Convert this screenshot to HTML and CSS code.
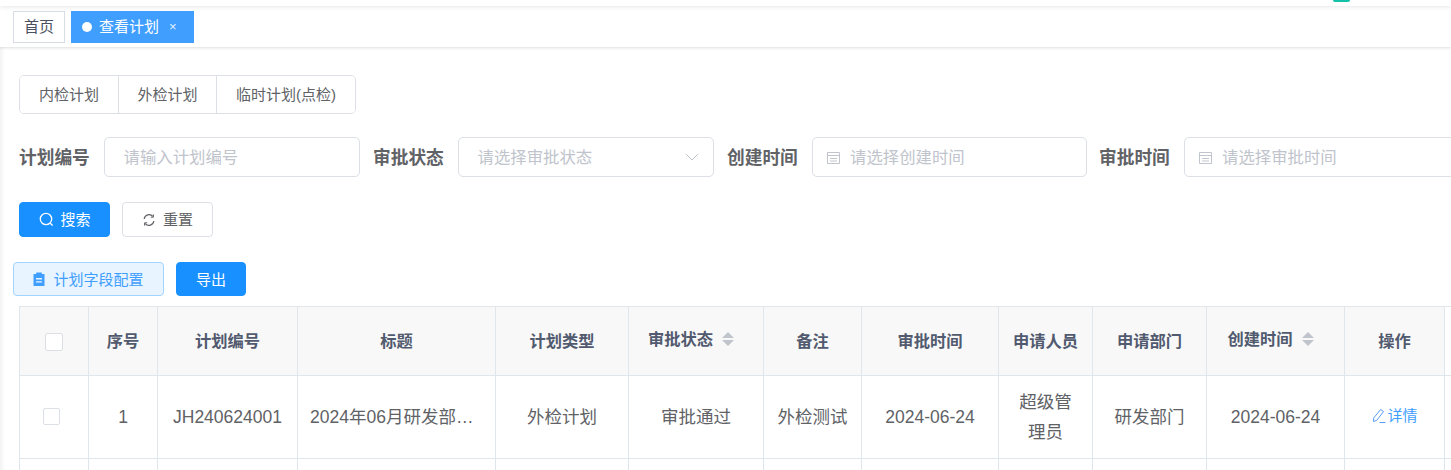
FILE: index.html
```html
<!DOCTYPE html>
<html lang="zh">
<head>
<meta charset="utf-8">
<title>查看计划</title>
<link rel="stylesheet" href="styles.css">
</head>
<body>
<div class="app">
  <header class="navbar"><span class="nav-badge"></span></header>
  <nav class="tags">
    <span class="tag">首页</span>
    <span class="tag tag-active"><i class="dot"></i>查看计划<span class="close">×</span></span>
  </nav>
  <main class="content">
    <div class="seg">
      <button class="seg-btn seg-a">内检计划</button>
      <button class="seg-btn seg-b">外检计划</button>
      <button class="seg-btn seg-c">临时计划(点检)</button>
    </div>
    <form class="filters">
      <label class="lbl">计划编号</label>
      <div class="field f-text"><span class="ph">请输入计划编号</span></div>
      <label class="lbl">审批状态</label>
      <div class="field f-select"><span class="ph">请选择审批状态</span>
        <svg class="chev" width="14" height="14" viewBox="0 0 14 14"><path d="M1 4l6 6 6-6" fill="none" stroke="#c0c4cc" stroke-width="1"/></svg>
      </div>
      <label class="lbl">创建时间</label>
      <div class="field f-date">
        <svg class="cal" width="15" height="15" viewBox="0 0 15 15"><path d="M1.5 2.5h12v11h-12zM1.5 5.500h12M4 8.500h7M4 11h7" fill="none" stroke="#c0c4cc"/></svg>
        <span class="ph">请选择创建时间</span></div>
      <label class="lbl">审批时间</label>
      <div class="field f-date f-last">
        <svg class="cal" width="15" height="15" viewBox="0 0 15 15"><path d="M1.5 2.5h12v11h-12zM1.5 5.500h12M4 8.500h7M4 11h7" fill="none" stroke="#c0c4cc"/></svg>
        <span class="ph">请选择审批时间</span></div>
    </form>
    <div class="actions">
      <button class="btn btn-primary btn-w">
        <svg class="ic-search" width="15" height="15" viewBox="0 0 15 15"><circle cx="8" cy="7" r="5.7" fill="none" stroke="#fff" stroke-width="1.3"/><path d="M12 11l2.600 2.600" stroke="#fff" stroke-width="1.3"/></svg><span class="t">搜索</span></button>
      <button class="btn btn-plain btn-w">
        <svg width="14" height="14" viewBox="0 0 14 14"><path d="M2.2 6A4.9 4.9 0 0 1 10.8 3.4M11.8 8A4.9 4.9 0 0 1 3.2 10.6" fill="none" stroke="#606266" stroke-width="1.2"/><path d="M11.4 1.4v2.8H8.8M2.6 12.6V9.8h2.6" fill="none" stroke="#606266" stroke-width="1"/></svg><span class="t">重置</span></button>
    </div>
    <div class="tools">
      <button class="btn btn-light">
        <svg width="12" height="14" viewBox="0 0 12 14"><path fill="#409eff" fill-rule="evenodd" d="M.5 2H3.2V.6h5.600V2h2.700v12H.5zM3 6v1.400h6V6zm0 3.200v1.400h6V9.200z"/></svg><span class="t">计划字段配置</span></button>
      <button class="btn btn-primary btn-export"><span class="t">导出</span></button>
    </div>
    <table class="grid">
      <colgroup>
        <col class="c1"><col class="c2"><col class="c3"><col class="c4"><col class="c5"><col class="c6"><col class="c7"><col class="c8"><col class="c9"><col class="c10"><col class="c11"><col class="c12"><col class="c13">
      </colgroup>
      <thead>
        <tr>
          <th><span class="check check-h"></span></th>
          <th>序号</th>
          <th>计划编号</th>
          <th>标题</th>
          <th>计划类型</th>
          <th><span class="sortable">审批状态<i class="sort"><b class="up"></b><b class="down"></b></i></span></th>
          <th>备注</th>
          <th>审批时间</th>
          <th>申请人员</th>
          <th>申请部门</th>
          <th><span class="sortable">创建时间<i class="sort"><b class="up"></b><b class="down"></b></i></span></th>
          <th>操作</th>
          <th class="gutter"></th>
        </tr>
      </thead>
      <tbody>
        <tr class="row">
          <td><span class="check check-b"></span></td>
          <td>1</td>
          <td>JH240624001</td>
          <td class="left">2024年06月研发部…</td>
          <td>外检计划</td>
          <td>审批通过</td>
          <td>外检测试</td>
          <td>2024-06-24</td>
          <td class="wrap">超级管理员</td>
          <td>研发部门</td>
          <td>2024-06-24</td>
          <td><a class="link"><svg width="15" height="16" viewBox="0 0 15 16"><path d="M9.600 1.500l3 2-6.800 8.800-3.300 1.200.2-3.500zM8.500 14.500h6" fill="none" stroke="#5a9cf8" stroke-width="1"/></svg>详情</a></td>
          <td class="gutter"></td>
        </tr>
        <tr class="row">
          <td></td><td></td><td></td><td></td><td></td><td></td><td></td><td></td><td></td><td></td><td></td><td></td><td class="gutter"></td>
        </tr>
      </tbody>
    </table>
  </main>
</div>
</body>
</html>
```

FILE: styles.css
```css
* { box-sizing: border-box; }
html, body { margin: 0; height: 470px; overflow: hidden; background: #fff; }
body {
  font-family: "Liberation Sans", "Noto Sans CJK SC", sans-serif;
  color: #606266;
}
.app {
  width: 1451px;
  height: 470px;
  overflow: hidden;
  position: relative;
}
.app::before {
  content: "";
  position: absolute;
  left: 0; top: 47px; bottom: 0;
  width: 5px;
  background: linear-gradient(to right, #f3f3f5, #fff);
  pointer-events: none;
}
.navbar {
  height: 6px;
  background: #fff;
  box-shadow: 0 1px 4px rgba(0, 21, 41, .1);
  position: relative;
  z-index: 1;
  padding-right: 101px;
  display: flex;
  justify-content: flex-end;
}
.nav-badge {
  width: 17px;
  height: 2px;
  background: #13c2a8;
  border-radius: 0 0 4px 4px;
}
.tags {
  height: 41px;
  display: flex;
  align-items: flex-start;
  gap: 6px;
  padding: 5px 0 0 13px;
  background: #fff;
  box-shadow: 0 1px 3px 0 rgba(0, 0, 0, .12), 0 0 3px 0 rgba(0, 0, 0, .04);
  position: relative;
}
.tag {
  height: 32px;
  line-height: 30px;
  border: 1px solid #d8dce5;
  padding: 0 10px;
  font-size: 15px;
  color: #495060;
  background: #fff;
  display: flex;
  align-items: center;
}
.tag-active {
  width: 123px;
  background: #409eff;
  border-color: #409eff;
  color: #fff;
}
.dot {
  width: 10px;
  height: 10px;
  border-radius: 50%;
  background: #fff;
  margin-right: 7px;
}
.close {
  font-size: 13px;
  margin-left: 10px;
  opacity: .85;
}
.content { padding: 28px 0 0 19px; }
.seg {
  display: flex;
  width: 337px;
  height: 39px;
  border: 1px solid #dcdfe6;
  border-radius: 5px;
  overflow: hidden;
}
.seg-btn {
  border: 0;
  border-right: 1px solid #dcdfe6;
  background: #fff;
  font: inherit;
  font-size: 15px;
  color: #606266;
  padding: 0 0 2px;
  height: 100%;
}
.seg-a { width: 99px; }
.seg-b { width: 98px; }
.seg-c { flex: 1; border-right: 0; }
.filters {
  display: flex;
  align-items: center;
  margin-top: 23px;
  height: 40px;
  white-space: nowrap;
}
.lbl {
  font-size: 17.7px;
  font-weight: 700;
  color: #606266;
  width: 70px;
  flex: none;
  margin-right: 15px;
  padding-bottom: 2px;
}
.field {
  height: 40px;
  border: 1px solid #dcdfe6;
  border-radius: 5px;
  background: #fff;
  display: flex;
  align-items: center;
  flex: none;
  margin-right: 13px;
  padding-left: 18.5px;
  font-size: 16.4px;
  color: #c0c4cc;
}
.ph { position: relative; top: -1px; }
.f-text { width: 256px; }
.f-select { width: 256px; justify-content: space-between; padding-right: 14px; }
.f-date { width: 275px; padding-left: 13px; margin-right: 12px; }
.f-last { margin-right: 0; }
.cal { margin-right: 9px; flex: none; }
.actions {
  display: flex;
  gap: 12px;
  margin-top: 25px;
}
.btn {
  font: inherit;
  font-size: 15px;
  height: 35px;
  border-radius: 4px;
  display: inline-flex;
  align-items: center;
  justify-content: center;
  padding: 0;
  border: 1px solid transparent;
}
.btn .t { position: relative; top: -1px; }
.btn svg { margin-right: 7px; flex: none; }
.btn-w { width: 91px; }
.btn-primary { background: #1890ff; border-color: #1890ff; color: #fff; }
.btn-plain { background: #fff; border-color: #dcdfe6; color: #606266; }
.tools {
  display: flex;
  gap: 12px;
  margin: 25px 0 0 -6px;
}
.btn-light {
  width: 151px;
  height: 34px;
  background: #e8f4ff;
  border-color: #a3d3ff;
  color: #409eff;
}
.btn-light svg { margin-right: 8px; }
.btn-export { width: 70px; height: 34px; }
.grid {
  table-layout: fixed;
  border-collapse: collapse;
  width: 1433px;
  margin-top: 10px;
  font-size: 17.5px;
  color: #606266;
}
.c1, .c2 { width: 69px; }
.c3 { width: 140px; }
.c4 { width: 198px; }
.c5 { width: 133px; }
.c6 { width: 135px; }
.c7 { width: 98px; }
.c8 { width: 137px; }
.c9 { width: 94px; }
.c10 { width: 114px; }
.c11 { width: 138px; }
.c12 { width: 100px; }
.c13 { width: 8px; }
th, td {
  border: 1px solid #dfe6ec;
  text-align: center;
  vertical-align: middle;
  padding: 0 12px;
}
th {
  height: 69px;
  background: #f8f8f9;
  font-size: 16.3px;
  font-weight: 700;
  color: #515a6e;
  white-space: nowrap;
  padding-bottom: 2px;
}
.row { height: 83px; }
td { line-height: 30px; overflow: hidden; }
th.gutter, td.gutter {
  background: #fff;
  border-right: 0;
  border-left: 1px solid #dfe6ec;
  padding: 0;
}
td.left { text-align: left; white-space: nowrap; }
.wrap { padding: 0 18px; }
.check {
  display: inline-block;
  border: 1px solid #dcdfe6;
  border-radius: 2px;
  background: #fff;
  vertical-align: middle;
}
.check-h { width: 18px; height: 18px; position: relative; top: 1px; }
.check-b { width: 17px; height: 17px; position: relative; left: -3px; top: -2px; }
.sortable {
  display: inline-flex;
  align-items: center;
  position: relative;
  top: -2px;
  left: -5px;
}
.sort {
  display: inline-flex;
  flex-direction: column;
  gap: 2px;
  margin-left: 9px;
  position: relative;
  top: 1px;
}
.up, .down {
  width: 0;
  height: 0;
  border-left: 6px solid transparent;
  border-right: 6px solid transparent;
}
.up { border-bottom: 6px solid #c0c4cc; }
.down { border-top: 6px solid #c0c4cc; }
.link {
  color: #409eff;
  font-size: 15px;
  display: inline-flex;
  align-items: center;
}
.link svg { margin-right: 1px; }
```
